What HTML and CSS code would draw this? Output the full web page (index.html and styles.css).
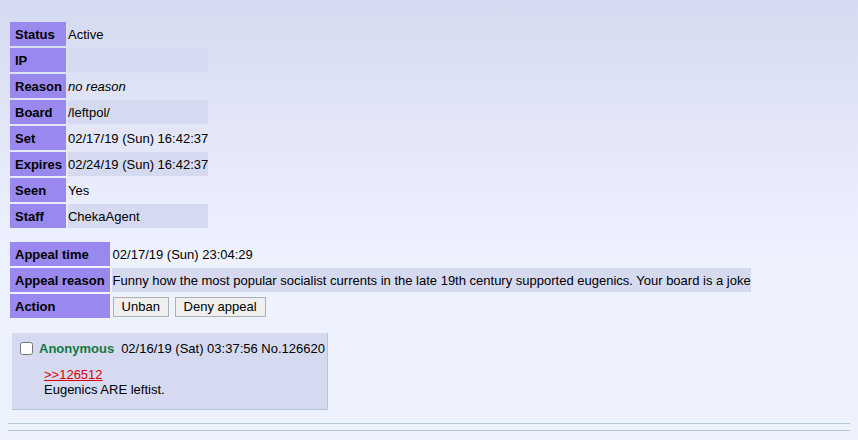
FILE: index.html
```html
<!DOCTYPE html>
<html lang="en">

<head>
    <meta charset="utf-8">
    <title>Ban appeal</title>
    <link rel="stylesheet" href="styles.css">
</head>

<body>

    <table class="ban">
        <tr>
            <th>Status</th>
            <td>Active</td>
        </tr>
        <tr class="alt">
            <th>IP</th>
            <td></td>
        </tr>
        <tr>
            <th>Reason</th>
            <td><em>no reason</em></td>
        </tr>
        <tr class="alt">
            <th>Board</th>
            <td>/leftpol/</td>
        </tr>
        <tr>
            <th>Set</th>
            <td>02/17/19 (Sun) 16:42:37</td>
        </tr>
        <tr class="alt">
            <th>Expires</th>
            <td>02/24/19 (Sun) 16:42:37</td>
        </tr>
        <tr>
            <th>Seen</th>
            <td>Yes</td>
        </tr>
        <tr class="alt">
            <th>Staff</th>
            <td>ChekaAgent</td>
        </tr>
    </table>

    <table class="ban appeal">
        <tr>
            <th>Appeal time</th>
            <td>02/17/19 (Sun) 23:04:29</td>
        </tr>
        <tr class="alt">
            <th>Appeal reason</th>
            <td>Funny how the most popular socialist currents in the late 19th century supported eugenics. Your board is a joke</td>
        </tr>
        <tr>
            <th>Action</th>
            <td class="actions">
                <button>Unban</button>
                <button>Deny appeal</button>
            </td>
        </tr>
    </table>

    <div class="post">
        <p class="intro">
            <input type="checkbox">
            <span class="name">Anonymous</span>
            <span>02/16/19 (Sat) 03:37:56 No.126620</span>
        </p>
        <div class="body">
            <a class="quote" href="#">&gt;&gt;126512</a><br>
            Eugenics ARE leftist.
        </div>
    </div>

    <hr>
    <hr>

</body>

</html>
```

FILE: styles.css
```css
html {
    background-color: #eef2ff;
}

body {
    margin: 0;
    padding: 20px 8px 0 8px;
    min-height: 420px;
    background: linear-gradient(#d6daf0, #eef2ff 260px);
    font-family: "Liberation Sans", Arial, sans-serif;
    font-size: 13px;
    color: #000;
}

.ban {
    border-spacing: 2px;
    line-height: 16px;
    white-space: nowrap;
}

.ban th {
    background-color: #9988ee;
    text-align: left;
    height: 24px;
    padding: 1px 4px 0 5px;
    box-sizing: border-box;
}

.ban td {
    height: 24px;
    padding: 1px 0 0 0;
    box-sizing: border-box;
}

.ban tr.alt td {
    background-color: #d6daf0;
}

.appeal {
    margin-top: 10px;
}

.appeal th {
    padding-right: 5px;
}

.appeal td {
    padding-left: 1px;
}

.actions button {
    font-family: "Liberation Sans", Arial, sans-serif;
    font-size: 13px;
    height: 20px;
    padding: 0 8px;
    margin: 0;
    background-color: #efefef;
    border: 1px solid #b0b0b0;
    border-radius: 0;
    color: #000;
    vertical-align: middle;
}

.actions button + button {
    margin-left: 2px;
}

.post {
    margin: 13px 0 0 4px;
    width: 307px;
    padding: 7px 0 12px 8px;
    background-color: #d6daf0;
    border-right: 1px solid #b7c5d9;
    border-bottom: 1px solid #b7c5d9;
}

.intro {
    margin: 0 0 11px 0;
    display: flex;
    align-items: center;
    height: 16px;
}

.intro input {
    margin: 0 6px 0 0;
    width: 13px;
    height: 13px;
}

.name {
    color: #117743;
    font-weight: bold;
    margin-right: 7px;
}

.body {
    margin-left: 24px;
    line-height: 15px;
}

.quote {
    color: #dd0000;
}

hr {
    border: none;
    border-top: 1px solid #b7c5d9;
    margin: 13px 0 0 0;
    height: 0;
}

hr + hr {
    margin-top: 6px;
}
```
